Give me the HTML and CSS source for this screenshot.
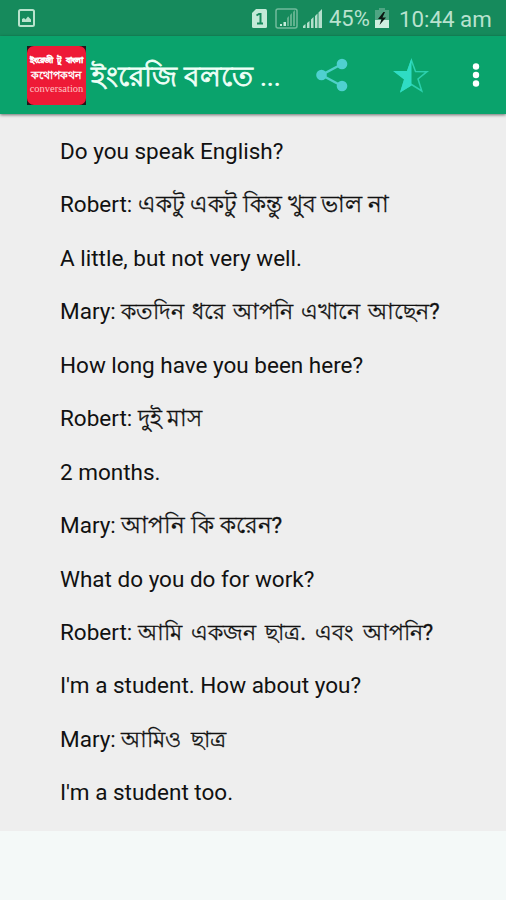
FILE: index.html
```
<!DOCTYPE html>
<html lang="bn">
<head>
<meta charset="utf-8">
<title>ইংরেজি বলতে</title>
<link rel="stylesheet" href="styles.css">
</head>
<body>
<div class="status">
  <svg class="shot" width="17" height="18" viewBox="0 0 17 18"><rect x="1" y="1" width="15" height="16" rx="1.5" fill="none" stroke="#b9e3cd" stroke-width="2"/><path d="M4 13V10l2-1 1.500 1.500L10 7.500l3 3V13z" fill="#b9e3cd"/></svg>
  <svg class="sim" width="15" height="19" viewBox="0 0 15 19"><path d="M4 0h9.500a1.500 1.500 0 0 1 1.500 1.500v16a1.500 1.500 0 0 1-1.500 1.500h-12A1.500 1.500 0 0 1 0 17.500V4z" fill="#c3ead8"/><path d="M4.500 6.500 7 5h1.500v9M5 14.500h6" fill="none" stroke="#168a5c" stroke-width="2"/></svg>
  <svg class="sig1" width="23" height="21" viewBox="0 0 23 21"><rect x="1" y="1" width="21" height="19" rx="2" fill="none" stroke="#72bb9c" stroke-width="1.500"/><path d="M5 18v-2h2v2zM8.500 18v-4h2.500v4z" fill="#c3ead8"/><path d="M12 18v-8l2-2v10zM15 18V7l2-2v13zM18 18V4l2-2v16z" fill="#61b18e"/></svg>
  <svg class="sig2" width="19" height="19" viewBox="0 0 19 19"><path d="M0 19v-2l2.500-2v4zM4 19v-5l2.500-2v7zM8 19v-8.500L10.500 8v11zM12 19V7l2.500-2.500V19zM15.500 19V3.500L19 0v19z" fill="#b4dfcc"/></svg>
  <span class="pct">45%</span>
  <svg class="bat" width="14" height="20" viewBox="0 0 14 20"><path d="M4 0h6v2h4v10H0V2h4z" fill="#4fa583"/><path d="M0 12h14v8H0z" fill="#d0eee0"/><path d="M8.500 4 3 11h3.500l-2 6L11 9.500H7.500L10 4z" fill="#0b1712"/></svg>
  <span class="clock">10:44 am</span>
</div>
<header class="bar">
  <div class="logo"><div class="tile"><span class="l1">ইংরেজী টু বাংলা</span><span class="l2">কথোপকথন</span><span class="l3">conversation</span></div></div>
  <h1>ইংরেজি বলতে <span class="dots">...</span></h1>
  <svg class="share" width="32" height="34" viewBox="0 0 32 34"><path d="M26 6 5.500 17 26 28" fill="none" stroke="#4fd0c9" stroke-width="2.400"/><g fill="#4fd0d0"><circle cx="26" cy="6" r="5.300"/><circle cx="5.500" cy="17" r="5.300"/><circle cx="26" cy="28" r="5.300"/></g></svg>
  <svg class="star" width="37" height="35" viewBox="0 0 37 35"><path d="M18.500 2.500 22.500 13.500 34 13.700 25 21 28.800 33 18.500 26.500 8.200 33 12 21 3 13.700 14.500 13.500z" fill="none" stroke="#2cd0ae" stroke-width="1.500"/><path d="M18.500 0v27.500L7 34.500 11 21.500 0 13h14z" fill="#2fdcc4"/></svg>
  <svg class="more" width="8" height="24" viewBox="0 0 8 24"><g fill="#fff"><circle cx="4" cy="3.500" r="3.200"/><circle cx="4" cy="12" r="3.200"/><circle cx="4" cy="20.500" r="3.200"/></g></svg>
</header>
<main class="talk">
  <p>Do you speak English?</p>
  <p>Robert: <span class="lg">একটু একটু কিন্তু খুব ভাল না</span></p>
  <p>A little, but not very well.</p>
  <p>Mary: <span>কতদিন ধরে আপনি এখানে আছেন?</span></p>
  <p>How long have you been here?</p>
  <p>Robert: <span class="lg">দুই মাস</span></p>
  <p>2 months.</p>
  <p>Mary: <span class="lg">আপনি কি করেন?</span></p>
  <p>What do you do for work?</p>
  <p>Robert: <span class="wide">আমি একজন ছাত্র. এবং আপনি?</span></p>
  <p>I'm a student. How about you?</p>
  <p>Mary: <span class="wide">আমিও ছাত্র</span></p>
  <p>I'm a student too.</p>
</main>
</body>
</html>
```
FILE: styles.css
```
* { box-sizing: border-box; }
body { margin: 0; height: 900px; overflow: hidden; background: #f4f9f8; font-family: Roboto, sans-serif; color: #111; }
svg { display: block; flex: none; }
.status { display: flex; align-items: center; height: 36px; padding: 0 0 0 18px; background: #168a5c; color: #b9e2cf; font-size: 22.500px; line-height: 38px; white-space: nowrap; }
.sim { margin-left: 217px; }
.sig1 { margin-left: 8px; }
.sig2 { margin-left: 5px; }
.pct { width: 42px; margin-left: 7px; font-size: 22px; padding-top: 2px; }
.bat { margin-left: 4px; }
.clock { margin-left: 10px; font-size: 22.300px; padding-top: 1px; }
.bar { display: flex; align-items: center; height: 78px; padding-left: 27px; background: #0aa36c; box-shadow: 0 1px 3px rgba(0,0,0,.55); position: relative; }
.logo { flex: none; width: 59px; height: 59px; background: #24151a; }
.tile { height: 59px; border-radius: 7px; background: #ee1a36; color: #fff; display: flex; flex-direction: column; align-items: center; white-space: nowrap; padding-top: 7px; }
.l1 { font-size: 8.200px; line-height: 15px; font-weight: 700; word-spacing: 2px; -webkit-text-stroke: .3px #fff; }
.l2 { font-size: 11.300px; line-height: 15px; font-weight: 700; }
.l3 { font: 10.500px/12px "Liberation Serif", serif; color: #ffc2c2; }
.bar h1 { margin: 0 0 0 5px; width: 221px; padding-top: 4px; font-size: 28px; line-height: 40px; font-weight: 500; color: #effff7; white-space: nowrap; -webkit-text-stroke: .8px #effff7; }
.dots { font-size: 25px; -webkit-text-stroke: 0; }
.share { margin-left: 4px; }
.star { margin-left: 45px; }
.more { margin-left: 42px; }
.talk { height: 717px; padding: 11px 0 0 60px; background: #eee; }
.talk p { margin: 0; height: 53.44px; line-height: 53.44px; font-size: 22.500px; white-space: nowrap; }
.talk span { font-size: 22px; word-spacing: 2.500px; -webkit-text-stroke: .3px #111; }
.talk .lg { font-size: 22.500px; word-spacing: 0; }
.talk .wide { word-spacing: 3.800px; }
```
